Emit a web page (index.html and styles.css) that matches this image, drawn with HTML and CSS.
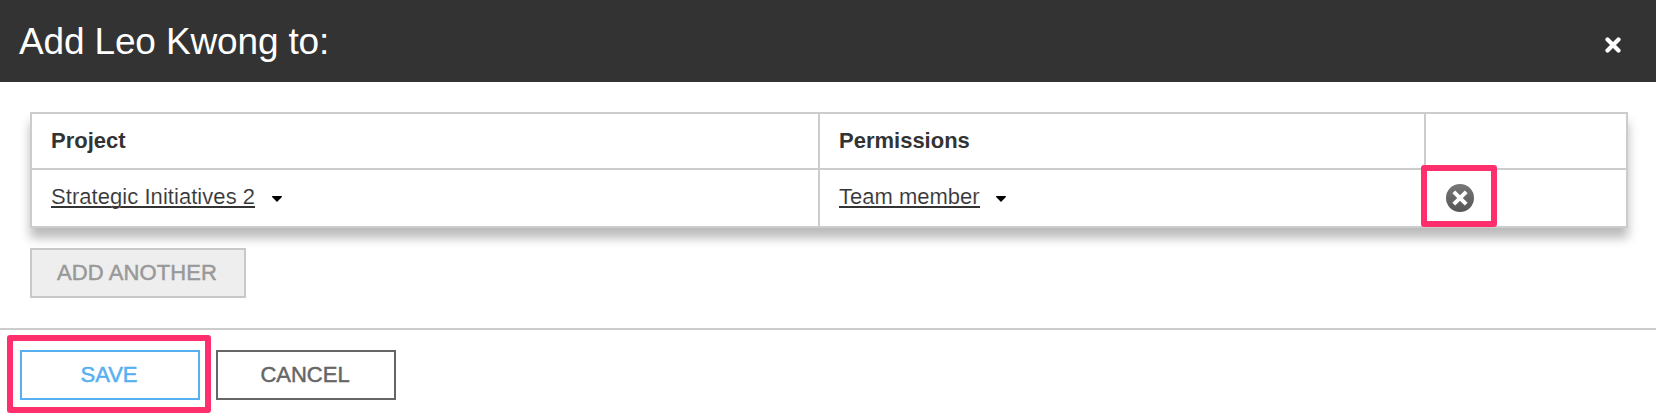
FILE: index.html
```html
<!DOCTYPE html>
<html lang="en">
<head>
<meta charset="utf-8">
<title>Add Leo Kwong to:</title>
<link rel="stylesheet" href="styles.css">
</head>
<body>
<div class="dialog">
  <header class="dialog-header">
    <h1 class="title">Add Leo Kwong to:</h1>
    <svg class="close" width="16" height="16" viewBox="0 0 16 16"><path d="M2.5 2.5 13.5 13.5M13.5 2.5 2.5 13.5"/></svg>
  </header>
  <main class="content">
    <div class="grid">
      <div class="cell head"><span class="label">Project</span></div>
      <div class="cell head"><span class="label">Permissions</span></div>
      <div class="cell head"></div>
      <div class="cell"><span class="link initiative">Strategic Initiatives 2</span><svg class="caret" width="12" height="8" viewBox="0 0 12 8"><path d="M1 1H11Q10.8 2.6 9.4 3.4L6 7 2.6 3.4Q1.2 2.6 1 1Z"/></svg></div>
      <div class="cell"><span class="link member">Team member</span><svg class="caret" width="12" height="8" viewBox="0 0 12 8"><path d="M1 1H11Q10.8 2.6 9.4 3.4L6 7 2.6 3.4Q1.2 2.6 1 1Z"/></svg></div>
      <div class="cell actions">
        <svg class="remove" width="28" height="28" viewBox="0 0 28 28">
          <defs><linearGradient id="disc" x2="0" y2="1"><stop stop-color="#787878"/><stop offset="1" stop-color="#555"/></linearGradient></defs>
          <circle cx="14" cy="14" r="14" fill="url(#disc)"/>
          <path d="M7.8 7.8 20.2 20.2M20.2 7.8 7.8 20.2"/>
        </svg>
        <div class="highlight highlight-remove"></div>
      </div>
    </div>
    <button class="btn add"><span>ADD ANOTHER</span></button>
  </main>
  <footer class="footer">
    <div class="save-wrap"><button class="btn save"><span>SAVE</span></button><div class="highlight highlight-save"></div></div>
    <button class="btn cancel"><span>CANCEL</span></button>
  </footer>
</div>
</body>
</html>
```
FILE: styles.css
```css
* { box-sizing: border-box; }
body {
  margin: 0;
  background: #fff;
  color: #333;
  font: 22px/26px "Liberation Sans", Arial, sans-serif;
}
.dialog { width: 1656px; height: 418px; overflow: hidden; }
.dialog-header {
  height: 82px;
  padding: 7px 35px 0 19px;
  background: #333;
  display: flex;
  align-items: center;
  justify-content: space-between;
}
.title {
  margin: 0 0 5px;
  color: #fff;
  font-size: 37px;
  line-height: 44px;
  font-weight: 400;
  letter-spacing: -0.15px;
  white-space: nowrap;
}
.close { margin-top: 1px; fill: none; stroke: #fff; stroke-width: 4.2; stroke-linecap: round; }
.content { height: 246px; padding: 30px 28px 0 30px; }
.grid {
  height: 116px;
  display: grid;
  grid-template-columns: 788px 606px 202px;
  grid-template-rows: 56px 58px;
  border-left: 2px solid #ccc;
  border-top: 2px solid #ccc;
  box-shadow: 0 10px 10px rgba(0, 0, 0, 0.27);
}
.cell {
  display: flex;
  align-items: center;
  padding: 0 19px;
  background: #fff;
  border-right: 2px solid #ccc;
  border-bottom: 2px solid #ccc;
  white-space: nowrap;
}
.label { font-weight: 700; margin-top: -1px; }
.link {
  height: 23px;
  margin-top: -3px;
  border-bottom: 2px solid #333;
  line-height: 24px;
  -webkit-text-stroke: 0.15px #fff;
}
.initiative { letter-spacing: 0.05px; }
.caret { margin: 2px 0 0 16px; }
.member + .caret { margin-left: 15px; }
.actions { position: relative; padding-left: 20px; }
.remove path { fill: none; stroke: #fff; stroke-width: 4; }
.highlight { position: absolute; border: 6px solid #ff2f6d; border-radius: 3px; }
.highlight-remove { left: -5px; top: -5px; width: 76px; height: 62px; }
.highlight-save { left: -13px; top: -15px; width: 204px; height: 78px; }
.btn {
  display: block;
  height: 50px;
  width: 180px;
  padding: 0 2px 0 0;
  border: 2px solid;
  background: #fff;
  font: inherit;
  -webkit-text-stroke: 0.5px;
}
.add {
  width: 216px;
  margin-top: 20px;
  color: #999;
  background: #eee;
  border-color: #c8c8c8;
  letter-spacing: 0.1px;
}
.footer { border-top: 2px solid #ccc; padding: 20px; display: flex; gap: 16px; }
.save-wrap { position: relative; }
.save { color: #56b0f1; }
.cancel { color: #666; }
```
